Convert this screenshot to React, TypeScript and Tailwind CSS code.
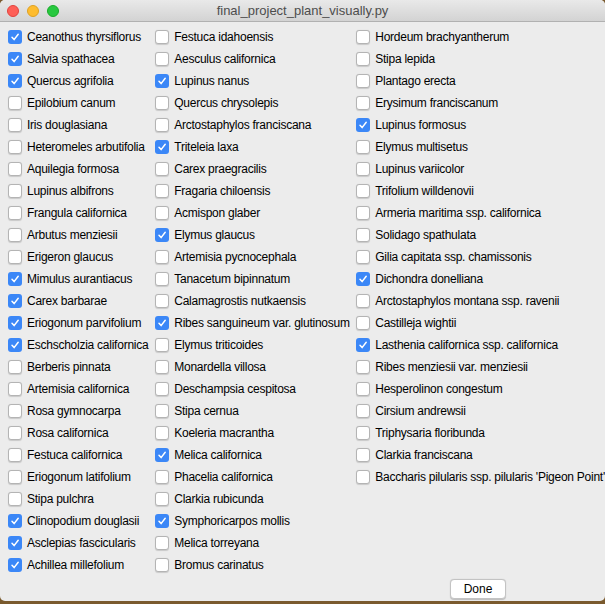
import React, { useState } from 'react';

type Plant = { name: string; checked: boolean };

const col1: Plant[] = [
  { name: 'Ceanothus thyrsiflorus', checked: true },
  { name: 'Salvia spathacea', checked: true },
  { name: 'Quercus agrifolia', checked: true },
  { name: 'Epilobium canum', checked: false },
  { name: 'Iris douglasiana', checked: false },
  { name: 'Heteromeles arbutifolia', checked: false },
  { name: 'Aquilegia formosa', checked: false },
  { name: 'Lupinus albifrons', checked: false },
  { name: 'Frangula californica', checked: false },
  { name: 'Arbutus menziesii', checked: false },
  { name: 'Erigeron glaucus', checked: false },
  { name: 'Mimulus aurantiacus', checked: true },
  { name: 'Carex barbarae', checked: true },
  { name: 'Eriogonum parvifolium', checked: true },
  { name: 'Eschscholzia californica', checked: true },
  { name: 'Berberis pinnata', checked: false },
  { name: 'Artemisia californica', checked: false },
  { name: 'Rosa gymnocarpa', checked: false },
  { name: 'Rosa californica', checked: false },
  { name: 'Festuca californica', checked: false },
  { name: 'Eriogonum latifolium', checked: false },
  { name: 'Stipa pulchra', checked: false },
  { name: 'Clinopodium douglasii', checked: true },
  { name: 'Asclepias fascicularis', checked: true },
  { name: 'Achillea millefolium', checked: true },
];

const col2: Plant[] = [
  { name: 'Festuca idahoensis', checked: false },
  { name: 'Aesculus californica', checked: false },
  { name: 'Lupinus nanus', checked: true },
  { name: 'Quercus chrysolepis', checked: false },
  { name: 'Arctostaphylos franciscana', checked: false },
  { name: 'Triteleia laxa', checked: true },
  { name: 'Carex praegracilis', checked: false },
  { name: 'Fragaria chiloensis', checked: false },
  { name: 'Acmispon glaber', checked: false },
  { name: 'Elymus glaucus', checked: true },
  { name: 'Artemisia pycnocephala', checked: false },
  { name: 'Tanacetum bipinnatum', checked: false },
  { name: 'Calamagrostis nutkaensis', checked: false },
  { name: 'Ribes sanguineum var. glutinosum', checked: true },
  { name: 'Elymus triticoides', checked: false },
  { name: 'Monardella villosa', checked: false },
  { name: 'Deschampsia cespitosa', checked: false },
  { name: 'Stipa cernua', checked: false },
  { name: 'Koeleria macrantha', checked: false },
  { name: 'Melica californica', checked: true },
  { name: 'Phacelia californica', checked: false },
  { name: 'Clarkia rubicunda', checked: false },
  { name: 'Symphoricarpos mollis', checked: true },
  { name: 'Melica torreyana', checked: false },
  { name: 'Bromus carinatus', checked: false },
];

const col3: Plant[] = [
  { name: 'Hordeum brachyantherum', checked: false },
  { name: 'Stipa lepida', checked: false },
  { name: 'Plantago erecta', checked: false },
  { name: 'Erysimum franciscanum', checked: false },
  { name: 'Lupinus formosus', checked: true },
  { name: 'Elymus multisetus', checked: false },
  { name: 'Lupinus variicolor', checked: false },
  { name: 'Trifolium willdenovii', checked: false },
  { name: 'Armeria maritima ssp. californica', checked: false },
  { name: 'Solidago spathulata', checked: false },
  { name: 'Gilia capitata ssp. chamissonis', checked: false },
  { name: 'Dichondra donelliana', checked: true },
  { name: 'Arctostaphylos montana ssp. ravenii', checked: false },
  { name: 'Castilleja wightii', checked: false },
  { name: 'Lasthenia californica ssp. californica', checked: true },
  { name: 'Ribes menziesii var. menziesii', checked: false },
  { name: 'Hesperolinon congestum', checked: false },
  { name: 'Cirsium andrewsii', checked: false },
  { name: 'Triphysaria floribunda', checked: false },
  { name: 'Clarkia franciscana', checked: false },
  { name: "Baccharis pilularis ssp. pilularis 'Pigeon Point'", checked: false },
];

const CheckRow: React.FC<{ plant: Plant }> = ({ plant }) => {
  const [on, setOn] = useState(plant.checked);
  return (
    <button onClick={() => setOn(!on)} className="flex items-center h-[22px] gap-[5px] text-left whitespace-nowrap">
      {on ? (
        <span className="w-[14px] h-[14px] rounded-[3px] bg-[#3b87f7] flex items-center justify-center shrink-0">
          <svg width="10" height="10" viewBox="0 0 10 10">
            <path d="M2 5.3 L4.1 7.6 L8.2 2.3" fill="none" stroke="white" strokeWidth="1.5" strokeLinecap="round" strokeLinejoin="round" />
          </svg>
        </span>
      ) : (
        <span className="w-[14px] h-[14px] rounded-[3px] bg-white border border-[#b4b4b4] shadow-[0_0.5px_1px_rgba(0,0,0,0.15)] shrink-0" />
      )}
      <span className="text-[12px] text-black tracking-[-0.25px]">{plant.name}</span>
    </button>
  );
};

export default function App() {
  return (
    <div className="w-[605px] h-[604px] bg-[#7a5a2e] overflow-hidden" style={{ fontFamily: '"Liberation Sans", Arial, sans-serif' }}>
      <div className="w-full h-[601px] bg-[#ececec] rounded-b-[5px] rounded-t-[5px] flex flex-col overflow-hidden">
        <div className="relative h-[22px] shrink-0 bg-gradient-to-b from-[#e9e9e9] to-[#d3d3d3] border-b border-[#b1b1b1] flex items-center justify-center">
          <div className="absolute left-[7px] top-[5px] flex gap-[8px]">
            <span className="w-[12px] h-[12px] rounded-full bg-[#fe5f57] border border-[#e0443e]" />
            <span className="w-[12px] h-[12px] rounded-full bg-[#febc2e] border border-[#dea123]" />
            <span className="w-[12px] h-[12px] rounded-full bg-[#28c840] border border-[#1aab29]" />
          </div>
          <span className="text-[13px] text-[#4d4d4d]">final_project_plant_visually.py</span>
        </div>
        <div className="flex pt-[4px] pl-[8px]">
          <div className="w-[148px] flex flex-col">
            {col1.map((p) => <CheckRow key={p.name} plant={p} />)}
          </div>
          <div className="w-[202px] flex flex-col">
            {col2.map((p) => <CheckRow key={p.name} plant={p} />)}
          </div>
          <div className="flex-1 flex flex-col">
            {col3.map((p) => <CheckRow key={p.name} plant={p} />)}
          </div>
        </div>
        <div className="flex justify-end pr-[99px] mt-[3px]">
          <button className="w-[56px] h-[20px] bg-white rounded-[4px] border border-[#c3c3c3] shadow-[0_0.5px_1px_rgba(0,0,0,0.2)] text-[12px] text-black">
            Done
          </button>
        </div>
      </div>
    </div>
  );
}
